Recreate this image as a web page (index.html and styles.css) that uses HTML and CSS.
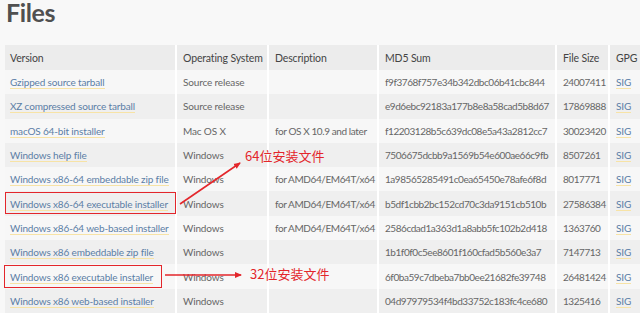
FILE: index.html
```html
<!DOCTYPE html>
<html lang="en">
<head>
  <meta charset="UTF-8">
  <title>Files</title>
  <link rel="stylesheet" href="styles.css">
</head>
<body>
  <div class="page">
    <h1 class="title">Files</h1>
    <table class="files">
      <colgroup>
        <col class="c-version"><col class="c-os"><col class="c-desc"><col class="c-md5"><col class="c-size"><col class="c-gpg">
      </colgroup>
      <thead>
        <tr><th>Version</th><th>Operating System</th><th>Description</th><th>MD5 Sum</th><th>File Size</th><th>GPG</th></tr>
      </thead>
      <tbody>
        <tr><td><a href="#">Gzipped source tarball</a></td><td>Source release</td><td class="desc"></td><td class="md5">f9f3768f757e34b342dbc06b41cbc844</td><td class="size">24007411</td><td><a href="#">SIG</a></td></tr>
        <tr><td><a href="#">XZ compressed source tarball</a></td><td>Source release</td><td class="desc"></td><td class="md5">e9d6ebc92183a177b8e8a58cad5b8d67</td><td class="size">17869888</td><td><a href="#">SIG</a></td></tr>
        <tr><td><a href="#">macOS 64-bit installer</a></td><td>Mac OS X</td><td class="desc">for OS X 10.9 and later</td><td class="md5">f12203128b5c639dc08e5a43a2812cc7</td><td class="size">30023420</td><td><a href="#">SIG</a></td></tr>
        <tr><td><a href="#">Windows help file</a></td><td>Windows</td><td class="desc"></td><td class="md5">7506675dcbb9a1569b54e600ae66c9fb</td><td class="size">8507261</td><td><a href="#">SIG</a></td></tr>
        <tr><td><a href="#">Windows x86-64 embeddable zip file</a></td><td>Windows</td><td class="desc">for AMD64/EM64T/x64</td><td class="md5">1a98565285491c0ea65450e78afe6f8d</td><td class="size">8017771</td><td><a href="#">SIG</a></td></tr>
        <tr><td><a href="#">Windows x86-64 executable installer</a></td><td>Windows</td><td class="desc">for AMD64/EM64T/x64</td><td class="md5">b5df1cbb2bc152cd70c3da9151cb510b</td><td class="size">27586384</td><td><a href="#">SIG</a></td></tr>
        <tr><td><a href="#">Windows x86-64 web-based installer</a></td><td>Windows</td><td class="desc">for AMD64/EM64T/x64</td><td class="md5">2586cdad1a363d1a8abb5fc102b2d418</td><td class="size">1363760</td><td><a href="#">SIG</a></td></tr>
        <tr><td><a href="#">Windows x86 embeddable zip file</a></td><td>Windows</td><td class="desc"></td><td class="md5">1b1f0f0c5ee8601f160cfad5b560e3a7</td><td class="size">7147713</td><td><a href="#">SIG</a></td></tr>
        <tr><td><a href="#">Windows x86 executable installer</a></td><td>Windows</td><td class="desc"></td><td class="md5">6f0ba59c7dbeba7bb0ee21682fe39748</td><td class="size">26481424</td><td><a href="#">SIG</a></td></tr>
        <tr><td><a href="#">Windows x86 web-based installer</a></td><td>Windows</td><td class="desc"></td><td class="md5">04d97979534f4bd33752c183fc4ce680</td><td class="size">1325416</td><td><a href="#">SIG</a></td></tr>
      </tbody>
    </table>

    <!-- annotations drawn over the table -->
    <div class="mark mark-64"></div>
    <div class="mark mark-32"></div>
    <svg class="arrows" width="640" height="313" viewBox="0 0 640 313">
      <defs>
        <marker id="head" markerWidth="8" markerHeight="8" refX="6" refY="4" orient="auto" markerUnits="userSpaceOnUse">
          <path d="M0,1 L7,4 L0,7 Z" fill="#e3262b"/>
        </marker>
      </defs>
      <line x1="180" y1="204" x2="240" y2="163" stroke="#e3262b" stroke-width="1.6" marker-end="url(#head)"/>
      <line x1="165" y1="275" x2="241" y2="275" stroke="#e3262b" stroke-width="1.6" marker-end="url(#head)"/>
    </svg>
    <div class="note note-64">64位安装文件</div>
    <div class="note note-32">32位安装文件</div>
  </div>
</body>
</html>
```

FILE: styles.css
```css
html, body {
  margin: 0; padding: 0;
  background: #f8f8f8;
  font-family: Lato, "Open Sans", Arial, sans-serif;
  color: #666;
  overflow: hidden;
}
.page {
  position: relative;
  width: 640px; height: 313px;
  overflow: hidden;
}
.title {
  margin: 0;
  padding: 0 0 0 6px;
  height: 45px;
  font-size: 25px;
  line-height: 25px;
  font-weight: 700;
  color: #505050;
  letter-spacing: -0.4px;
}

.files {
  margin-left: 5px;
  border-collapse: collapse;
  table-layout: fixed;
  width: 645px;
  font-size: 10px;
  letter-spacing: -0.15px;
}
.c-version { width: 171px; }
.c-os { width: 92px; }
.c-desc { width: 110px; }
.c-md5 { width: 178px; }
.c-size { width: 53px; }
.c-gpg { width: 41px; }

.files th, .files td {
  text-align: left;
  white-space: nowrap;
  overflow: hidden;
  padding: 0 0 0 6px;
  border-left: 2px solid #fff;
}
.files th:first-child, .files td:first-child {
  border-left: none;
  padding-left: 5px;
}
.files thead tr {
  height: 25px;
  background: #ececec;
}
.files th {
  font-weight: 400;
  color: #444;
  font-size: 10.5px;
}
.files tbody tr { height: 24.3px; }
.files tbody tr:nth-child(odd) { background: #f7f7f7; }
.files tbody tr:nth-child(even) { background: #efefef; }
.files .desc { letter-spacing: -0.4px; }
.files .md5 { letter-spacing: -0.45px; }
.files .size { letter-spacing: -0.45px; }

.files a {
  color: #5b7ea6;
  text-decoration: none;
  border-bottom: 1px solid #f7e3a6;
}

.mark {
  position: absolute;
  border: 1.5px solid #e3262b;
  box-sizing: border-box;
}
.mark-64 { left: 5px; top: 192px; width: 171px; height: 22px; }
.mark-32 { left: 4px; top: 265px; width: 158px; height: 23px; }

.arrows {
  position: absolute;
  left: 0; top: 0;
}
.note {
  position: absolute;
  color: #e3262b;
  font-family: "Noto Sans CJK SC", sans-serif;
  font-size: 13px;
  line-height: 16px;
}
.note-64 { left: 245px; top: 148px; }
.note-32 { left: 250px; top: 266px; }
```
